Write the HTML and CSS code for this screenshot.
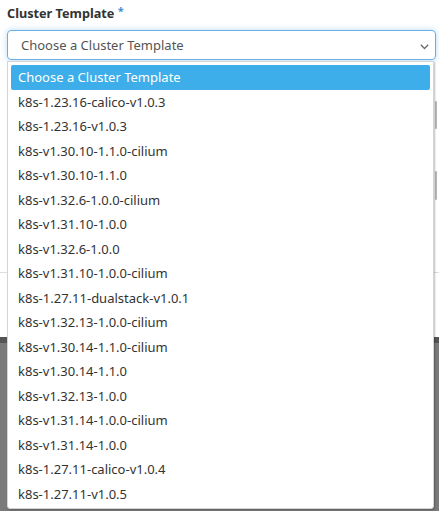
FILE: index.html
```html
<!DOCTYPE html>
<html>
<head>
<meta charset="utf-8">
<link rel="stylesheet" href="styles.css">
</head>
<body>
<div class="page">
  <div class="form">
    <div class="field">
      <label class="label">Cluster Template <span class="req">*</span></label>
      <div class="select">
        <span class="placeholder">Choose a Cluster Template</span>
        <svg class="chev" width="9" height="6" viewBox="0 0 9 6"><path d="M0.8 0.8 L4.5 4.5 L8.2 0.8" fill="none" stroke="#6b6b6b" stroke-width="1.3"/></svg>
        <div class="menu">
          <div class="opt sel">Choose a Cluster Template</div>
          <div class="opt">k8s-1.23.16-calico-v1.0.3</div>
          <div class="opt">k8s-1.23.16-v1.0.3</div>
          <div class="opt">k8s-v1.30.10-1.1.0-cilium</div>
          <div class="opt">k8s-v1.30.10-1.1.0</div>
          <div class="opt">k8s-v1.32.6-1.0.0-cilium</div>
          <div class="opt">k8s-v1.31.10-1.0.0</div>
          <div class="opt">k8s-v1.32.6-1.0.0</div>
          <div class="opt">k8s-v1.31.10-1.0.0-cilium</div>
          <div class="opt">k8s-1.27.11-dualstack-v1.0.1</div>
          <div class="opt">k8s-v1.32.13-1.0.0-cilium</div>
          <div class="opt">k8s-v1.30.14-1.1.0-cilium</div>
          <div class="opt">k8s-v1.30.14-1.1.0</div>
          <div class="opt">k8s-v1.32.13-1.0.0</div>
          <div class="opt">k8s-v1.31.14-1.0.0-cilium</div>
          <div class="opt">k8s-v1.31.14-1.0.0</div>
          <div class="opt">k8s-1.27.11-calico-v1.0.4</div>
          <div class="opt">k8s-1.27.11-v1.0.5</div>
        </div>
      </div>
    </div>
    <div class="hidden-fields">
      <div class="scroller s1"></div>
      <div class="scroller s2"></div>
    </div>
    <div class="divider"></div>
  </div>
  <div class="footer"></div>
</div>
</body>
</html>
```
FILE: styles.css
```css
html, body {
  margin: 0;
  padding: 0;
}
body {
  font-family: "Noto Sans", "Open Sans", sans-serif;
  background: #fff;
  width: 439px;
  height: 511px;
  overflow: hidden;
}
.page {
  display: flex;
  flex-direction: column;
  height: 511px;
}
.form {
  height: 337px;
  padding: 0 0 0 7px;
  box-sizing: border-box;
  display: flex;
  flex-direction: column;
}
.field {
  padding-top: 2px;
  margin-right: 3px;
}
.label {
  display: block;
  font-weight: bold;
  font-size: 12.7px;
  color: #333;
  line-height: 18px;
  margin-bottom: 8px;
}
.req {
  color: #3a8fd6;
  font-size: 11px;
  vertical-align: 3px;
}
.select {
  position: relative;
  height: 30px;
  border: 1px solid #66afe9;
  border-radius: 4px;
  box-shadow: 0 0 6px rgba(102, 175, 233, 0.45);
  display: flex;
  align-items: center;
  padding-left: 13px;
  box-sizing: border-box;
}
.placeholder {
  font-size: 13px;
  color: #555;
}
.chev {
  position: absolute;
  right: 6px;
  top: 13px;
}
.menu {
  position: absolute;
  left: -1px;
  top: 30px;
  width: 427px;
  height: 448px;
  background: #fff;
  border: 1px solid #d4d4d4;
  border-radius: 0 0 3px 3px;
  box-shadow: 1px 1px 2px rgba(0,0,0,0.25);
  padding: 3px 3px 0 3px;
  box-sizing: border-box;
  z-index: 10;
}
.opt {
  height: 24.53px;
  line-height: 24px;
  font-size: 13px;
  color: #333;
  padding-left: 7px;
  white-space: nowrap;
}
.opt.sel {
  background: #3daee9;
  color: #fff;
  border-radius: 2px;
}
.hidden-fields {
  position: relative;
  height: 202px;
}
.scroller {
  position: absolute;
  right: 2px;
  width: 2px;
  background: #b8b8b8;
  border-radius: 1px;
}
.s1 { top: 41px; height: 28px; }
.s2 { top: 111px; height: 29px; }
.divider {
  margin-top: 10px;
  margin-left: -7px;
  height: 1px;
  background: #dddddd;
}
.footer {
  flex: 1;
  background: #7a7a7a;
  border-top: 6px solid #555;
}
```
